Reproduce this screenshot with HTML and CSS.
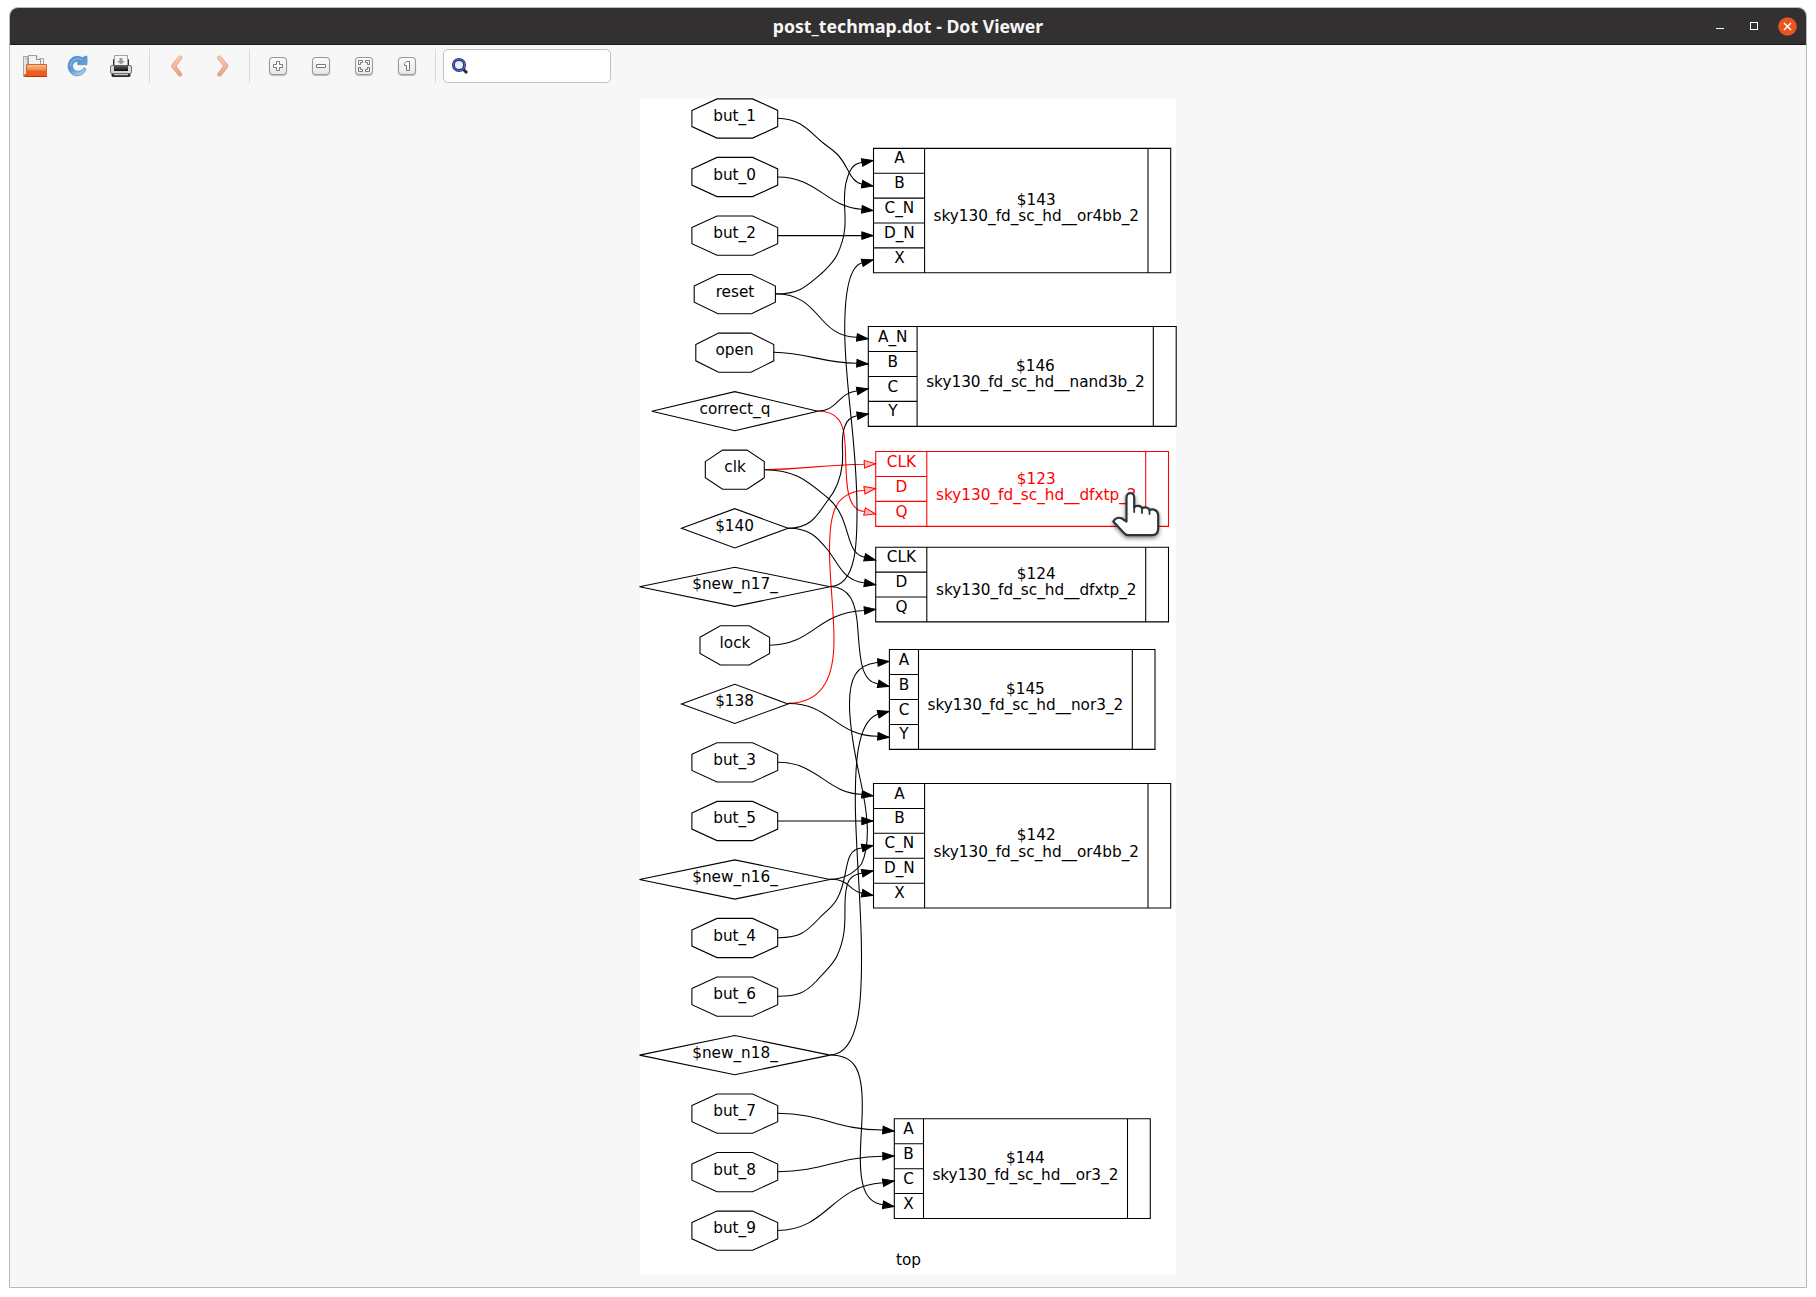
FILE: index.html
```html
<!DOCTYPE html>
<html lang="en">
<head>
<meta charset="utf-8">
<title>post_techmap.dot - Dot Viewer</title>
<link rel="stylesheet" href="styles.css">
</head>
<body>
<div class="window">
  <header class="titlebar">
    <h1 class="title">post_techmap.dot - Dot Viewer</h1>
    <div class="controls">
      <svg width="8" height="8" viewBox="0 0 8 8"><path d="M0 6.5H8" stroke="#fff" fill="none"/></svg>
      <svg width="8" height="8" viewBox="0 0 8 8"><rect x=".5" y=".5" width="7" height="7" stroke="#fff" fill="none"/></svg>
      <svg width="19" height="19" viewBox="0 0 19 19"><circle cx="9.5" cy="9.5" r="9.3" fill="#e95420"/><path d="M6 6L13 13M13 6L6 13" stroke="#fff" stroke-width="1.5" fill="none"/></svg>
    </div>
  </header>

  <nav class="toolbar">
    <span class="tool"><svg width="26" height="24" viewBox="22 54 26 24">
      <defs><linearGradient id="orange" x1="0" y1="0" x2="0" y2="1"><stop offset="0" stop-color="#f6c49a"/><stop offset=".45" stop-color="#f08a4b"/><stop offset=".55" stop-color="#e9601f"/><stop offset="1" stop-color="#f0561c"/></linearGradient></defs>
      <path d="M23.5 56.500h4v20h-4z" fill="#e3e3e3" stroke="#a5a5a5"/><path d="M25 58.500h2.500" stroke="#f0a860"/>
      <path d="M33.500 58.500h10v8h-10z" fill="#eee" stroke="#aaa"/>
      <path d="M28.500 55.500h8l4 4v8h-12z" fill="#f1f1f1" stroke="#9c9c9c"/><path d="M36.500 55.500v4h4" fill="#fff" stroke="#888"/>
      <path d="M26.500 64.500h20v12H24.500v-2h2z" fill="url(#orange)" stroke="#d9622a"/><path d="M25 76.500h22" stroke="#bb2f0c"/>
    </svg></span>
    <span class="tool"><svg width="22" height="22" viewBox="67 56 22 22">
      <defs><linearGradient id="blue" x1="0" y1="0" x2=".6" y2="1"><stop offset="0" stop-color="#4d8fcd"/><stop offset=".6" stop-color="#5f9dd6"/><stop offset="1" stop-color="#a9cdee"/></linearGradient></defs>
      <path d="M87 57.300v8.400H77.700v-2.400l1.900-.6c-4.200-1-7.200 1.300-7 4.500.2 3.600 3.700 6 7.400 4.800 1.700-.5 2.900-1.700 4-3.300l2 1.300c-1.500 4.200-4.500 6.800-9 6.700-5.200 0-9-4.300-8.900-9.600.1-5.800 4.300-10 9.700-9.800 2 .1 3.800.7 5 1.700l1.500-1.700z" fill="url(#blue)" stroke="#4d88c4" stroke-width=".7"/>
      <path d="M81.500 60.500C76 58 70.500 61.500 70.500 67" fill="none" stroke="#9cc5ea" stroke-width="1"/>
    </svg></span>
    <span class="tool"><svg width="24" height="24" viewBox="109 54 24 24">
      <defs><linearGradient id="ink" x1="0" y1="0" x2="0" y2="1"><stop offset="0" stop-color="#666"/><stop offset="1" stop-color="#0c0c0c"/></linearGradient></defs>
      <rect x="113" y="59" width="16" height="10" rx="1" fill="#303030"/>
      <path d="M114.500 55.500h13v10h-13z" fill="#f6f6f6" stroke="#a2a2a2"/>
      <path d="M119.500 58h3v3h2.500l-4 3.500-4-3.500h2.500z" fill="#9b9b9b"/>
      <rect x="110.500" y="65.500" width="21" height="8" rx="1.500" fill="#d6d6d6" stroke="#707070"/>
      <path d="M114 65h14v6h-14z" fill="url(#ink)"/>
      <path d="M111.500 74h19v1.500q0 1.500-2 1.500h-15q-2 0-2-1.500z" fill="#2a2a2a"/><path d="M114 74.700h14" stroke="#f0f0f0"/>
    </svg></span>
    <i class="sep sep-a"></i>
    <span class="tool tool-prev"><svg width="14" height="22" viewBox="170 55 14 22">
      <defs><linearGradient id="peach" gradientUnits="userSpaceOnUse" x1="0" y1="57" x2="0" y2="75"><stop offset="0" stop-color="#f3cda8"/><stop offset="1" stop-color="#efa08a"/></linearGradient></defs>
      <path d="M180 57.800L173.500 66L180 74.300" fill="none" stroke="#dfa080" stroke-width="4.500" stroke-linecap="round" stroke-linejoin="round"/><path d="M180 57.800L173.500 66L180 74.300" fill="none" stroke="url(#peach)" stroke-width="3.300" stroke-linecap="round" stroke-linejoin="round"/>
    </svg></span>
    <span class="tool tool-next"><svg width="14" height="22" viewBox="216 55 14 22">
      <path d="M219.500 57.800L226 66L219.500 74.300" fill="none" stroke="#dfa080" stroke-width="4.500" stroke-linecap="round" stroke-linejoin="round"/><path d="M219.500 57.800L226 66L219.500 74.300" fill="none" stroke="url(#peach)" stroke-width="3.300" stroke-linecap="round" stroke-linejoin="round"/>
    </svg></span>
    <i class="sep sep-b"></i>
    <span class="tool key"><svg width="18" height="18" viewBox="0 0 18 18"><path d="M7.500 4.500h3v3h3v3h-3v3h-3v-3h-3v-3h3z"/></svg></span>
    <span class="tool key"><svg width="18" height="18" viewBox="0 0 18 18"><path d="M4.500 7.500h9v3h-9z"/></svg></span>
    <span class="tool key"><svg width="18" height="18" viewBox="0 0 18 18"><path d="M3.500 3.500h4v2h-2v2h-2zM14.500 3.500h-4v2h2v2h2zM3.500 14.500h4v-2h-2v-2h-2zM14.500 14.500h-4v-2h2v-2h2z"/></svg></span>
    <span class="tool key"><svg width="18" height="18" viewBox="0 0 18 18"><path d="M8.500 4.500h3v9h-3v-5h-2v-2z"/></svg></span>
    <i class="sep sep-c"></i>
    <label class="search"><svg width="18" height="18" viewBox="451 57 18 18">
      <path d="M463.500 69.500L467 73" stroke="#2b2b22" stroke-width="3"/>
      <circle cx="459" cy="65" r="5.600" fill="#ececf4" stroke="#23357f" stroke-width="3"/><circle cx="459" cy="65" r="5.800" fill="none" stroke="#5577cc" stroke-width="1"/>
    </svg><input class="field" type="text" aria-label="Find"></label>
  </nav>

  <main class="canvas">
    <svg class="graph" width="536" height="1176" viewBox="640 99 536 1176">
      <defs>
        <marker id="tip" markerUnits="userSpaceOnUse" markerWidth="14" markerHeight="10" refX="12" refY="5" orient="auto"><path d="M.8 1.200L12 5L.8 8.800z" fill="#000" stroke="#000"/></marker>
        <marker id="tip-hot" markerUnits="userSpaceOnUse" markerWidth="14" markerHeight="10" refX="12" refY="5" orient="auto"><path d="M.8 1.200L12 5L.8 8.800z" fill="#ffbcbc" stroke="#f00"/></marker>
        <polygon id="but" points="-42.9,-8.1 -17.8,-19.6 17.8,-19.6 42.9,-8.1 42.9,8.1 17.8,19.6 -17.8,19.6 -42.9,8.1"/>
        <polygon id="reset" points="-40.6,-8.1 -16.8,-19.6 16.8,-19.6 40.6,-8.1 40.6,8.1 16.8,19.6 -16.8,19.6 -40.6,8.1"/>
        <polygon id="open" points="-39,-8.1 -16.200,-19.6 16.200,-19.6 39,-8.1 39,8.1 16.200,19.6 -16.200,19.6 -39,8.1"/>
        <polygon id="clk" points="-29.5,-8.1 -12.2,-19.6 12.2,-19.6 29.5,-8.1 29.5,8.1 12.2,19.6 -12.2,19.6 -29.5,8.1"/>
        <polygon id="lock" points="-34.8,-8.1 -14.4,-19.6 14.4,-19.6 34.8,-8.1 34.8,8.1 14.4,19.6 -14.4,19.6 -34.8,8.1"/>
        <polygon id="wire-s" points="-53.3,0 0,-19.6 53.3,0 0,19.6"/>
        <polygon id="wire-m" points="-83,0 0,-19.6 83,0 0,19.6"/>
        <polygon id="wire-l" points="-95.3,0 0,-19.6 95.3,0 0,19.6"/>
      </defs>

      <g class="line">
        <use href="#but" x="734.8" y="118.500"/><use href="#but" x="734.8" y="177"/><use href="#but" x="734.8" y="235.600"/>
        <use href="#reset" x="734.8" y="294.100"/><use href="#open" x="734.8" y="352.700"/><use href="#wire-m" x="734.8" y="411.200"/>
        <use href="#clk" x="734.8" y="469.700"/><use href="#wire-s" x="734.8" y="528.300"/><use href="#wire-l" x="734.8" y="586.800"/>
        <use href="#lock" x="734.8" y="645.400"/><use href="#wire-s" x="734.8" y="703.900"/><use href="#but" x="734.8" y="762.400"/>
        <use href="#but" x="734.8" y="821"/><use href="#wire-l" x="734.8" y="879.500"/><use href="#but" x="734.8" y="938"/>
        <use href="#but" x="734.8" y="996.600"/><use href="#wire-l" x="734.8" y="1055.100"/><use href="#but" x="734.8" y="1113.600"/>
        <use href="#but" x="734.8" y="1172.100"/><use href="#but" x="734.8" y="1230.700"/>
        <path d="M873.500 148.400H1170.700V272.800H873.500zM924.600 148.400V272.800M1148 148.400V272.800M873.500 173.200H924.600M873.500 198.100H924.600M873.500 223H924.600M873.500 247.900H924.600"/>
        <path d="M868.300 326.500H1176.200V426.400H868.300zM917.100 326.500V426.400M1153.300 326.500V426.400M868.300 351.500H917.100M868.300 376.500H917.100M868.300 401.400H917.100"/>
        <path d="M875.700 547.300H1168.500V621.900H875.700zM926.800 547.300V621.900M1145.700 547.300V621.900M875.700 572.100H926.800M875.700 597H926.800"/>
        <path d="M889.400 649.500H1155V749.400H889.400zM918.500 649.500V749.400M1132.300 649.500V749.400M889.400 674.500H918.500M889.400 699.500H918.500M889.400 724.500H918.500"/>
        <path d="M873.500 783.500H1170.700V908H873.500zM924.600 783.500V908M1148 783.500V908M873.500 808.500H924.600M873.500 833.300H924.600M873.500 858.300H924.600M873.500 883.300H924.600"/>
        <path d="M894.300 1118.800H1150.300V1218.500H894.300zM923.500 1118.800V1218.500M1127.500 1118.800V1218.500M894.300 1143.700H923.500M894.300 1168.700H923.500M894.300 1193.500H923.500"/>
      </g>

      <g class="line edge-hot">
        <path d="M764.300 469.700C800 469.500 822 465 863.500 464.200L875.500 463.700"/>
        <path d="M817.500 411C839 411 843 425 844.300 436C848 462 841 510 863.500 511.300L875.500 514"/>
        <path d="M788 703.300C826 703 834 672 834 640C834 610 829.500 580 829.500 550C829.500 512 835 493 863.500 490.300L875.500 488.500"/>
      </g>
      <g class="line hot"><path d="M875.700 451.500H1168.500V526.400H875.700zM926.800 451.500V526.400M1145.700 451.500V526.400M875.700 476.500H926.800M875.700 501.400H926.800"/></g>
      <g class="line edge">
        <path d="M777.500 118.300C801 119 808 130 822 142C828 147 832 149 837 154C849 166 849 181 861.500 184L873 186"/>
        <path d="M777.500 177C818 177 826 207 861.500 209.300L873 210.500"/>
        <path d="M777.500 235.600L873 235.600"/>
        <path d="M775.400 294C799 294 806 287 822 273C828 267 833 263 837 255C853 222 839 205 847 179C850 169 853 164 861.500 162.500L873 160.500"/>
        <path d="M775.400 293.700C821 294 816 336 856.500 337.300L868 338.800"/>
        <path d="M773.600 352.300C808 353 823 363 856.500 363.300L868 364"/>
        <path d="M817.500 411C838 411 838 393 856.500 391L868 388.800"/>
        <path d="M764.300 469.700C796 470 807 481 828 498C852 518 844 552 863.500 557L875.500 560"/>
        <path d="M788 528.300C812 528 817 515 828 500C833 494 835 490 837.500 484C848 456 838 443 845 426C847 420 850 417 857 415.800L868.300 414"/>
        <path d="M788 528.300C809 528 817 537 827 549C838 562 842 580 863.500 582.700L875.500 584.800"/>
        <path d="M830 586.500C858 586 857 536 857 510C857 440 845 390 844.700 330C844.700 308 846 268 861.500 263L873 260"/>
        <path d="M830 586.500C851 587 855 605 857 620C860 648 858 681 877.500 683.700L889 686.500"/>
        <path d="M769.600 645.200C813 645 816 613 863.500 610.500L875.500 609.300"/>
        <path d="M788 703.500C830 703 836 736 877 736.300L889 737.300"/>
        <path d="M777.500 762.300C818 762 826 793 861.500 794.300L873 795.800"/>
        <path d="M777.500 821L873 821"/>
        <path d="M830 879.300C848 879 857.500 869 861.500 864C872.500 840 865.500 804 861 783C855 756 849.500 728 849.500 704C849.500 678 856 665 877 662.500L889 661.500"/>
        <path d="M830 879.300C850 879 848 890 861.500 893L873 895.500"/>
        <path d="M777.500 937.700C800 938 806 932 819 918.500C826 911 832 908 837 899C850 876 842 850 861.500 848L873 845.500"/>
        <path d="M777.500 996.300C797 996.500 805 993 816 981.500C826 970 832 966 837 956C850 928 842 907 846.500 888C848 880 851 875 861.500 873.300L873 870.800"/>
        <path d="M830 1055C863 1054 861.500 985 861.500 955C861.500 905 855.300 845 855.300 800C855.300 770 856 723 877 714.500L889 711.500"/>
        <path d="M830 1055C855 1055 862.300 1070 862.300 1105C862.300 1125 860.300 1140 860.300 1158C860.300 1180 863 1202 882.500 1204.700L894 1206.500"/>
        <path d="M777.500 1113.300C824 1113.500 836 1130 882.500 1130L894 1131"/>
        <path d="M777.500 1171.800C824 1171.500 836 1157 882.500 1156.300L894 1156"/>
        <path d="M777.500 1230.500C828 1230 831 1186 882.500 1182.800L894 1181"/>
      </g>

      <g class="label">
        <text x="734.6" y="121">but_1</text><text x="734.6" y="180">but_0</text><text x="734.6" y="238">but_2</text>
        <text x="735" y="297">reset</text><text x="734.6" y="355">open</text><text x="735" y="414">correct_q</text>
        <text x="735" y="472">clk</text><text x="734.6" y="531">$140</text><text x="735" y="589">$new_n17_</text>
        <text x="735" y="648">lock</text><text x="734.6" y="706">$138</text><text x="734.6" y="765">but_3</text>
        <text x="734.6" y="823">but_5</text><text x="735" y="882">$new_n16_</text><text x="734.6" y="941">but_4</text>
        <text x="734.6" y="999">but_6</text><text x="735" y="1058">$new_n18_</text><text x="734.6" y="1116">but_7</text>
        <text x="734.6" y="1175">but_8</text><text x="734.6" y="1233">but_9</text>

        <text x="899.4" y="163">A</text><text x="899.4" y="188">B</text><text x="899.4" y="213">C_N</text><text x="899.4" y="238">D_N</text><text x="899.4" y="263">X</text>
        <text x="1036.300" y="205">$143</text><text x="1036.300" y="221">sky130_fd_sc_hd__or4bb_2</text>

        <text x="892.800" y="342">A_N</text><text x="892.800" y="367">B</text><text x="892.800" y="392">C</text><text x="892.800" y="416">Y</text>
        <text x="1035.400" y="371">$146</text><text x="1035.400" y="387">sky130_fd_sc_hd__nand3b_2</text>

        <g class="label-hot"><text x="901.4" y="467">CLK</text><text x="901.4" y="492">D</text><text x="901.4" y="517">Q</text>
        <text x="1036.300" y="484">$123</text><text x="1036.300" y="500">sky130_fd_sc_hd__dfxtp_2</text></g>

        <text x="901.4" y="562">CLK</text><text x="901.4" y="587">D</text><text x="901.4" y="612">Q</text>
        <text x="1036.300" y="579">$124</text><text x="1036.300" y="595">sky130_fd_sc_hd__dfxtp_2</text>

        <text x="904" y="665">A</text><text x="904" y="690">B</text><text x="904" y="715">C</text><text x="904" y="739">Y</text>
        <text x="1025.400" y="694">$145</text><text x="1025.400" y="710">sky130_fd_sc_hd__nor3_2</text>

        <text x="899.4" y="799">A</text><text x="899.4" y="823">B</text><text x="899.4" y="848">C_N</text><text x="899.4" y="873">D_N</text><text x="899.4" y="898">X</text>
        <text x="1036.300" y="840">$142</text><text x="1036.300" y="857">sky130_fd_sc_hd__or4bb_2</text>

        <text x="908.5" y="1134">A</text><text x="908.5" y="1159">B</text><text x="908.5" y="1184">C</text><text x="908.5" y="1209">X</text>
        <text x="1025.400" y="1163">$144</text><text x="1025.400" y="1180">sky130_fd_sc_hd__or3_2</text>
        <text x="908.5" y="1265">top</text>
      </g>

      <path class="pointer" d="M1126.500 521.500V497.500C1126.500 491.800 1134.200 491.800 1134.200 497.500V507.500C1136 505 1141 505.500 1142 508.500C1144.500 506.500 1148.500 507.300 1149.500 510C1153.500 508.300 1158.200 510.500 1158.200 515.500V528C1158.200 533 1156.500 535.200 1152 535.200H1128C1126 535.200 1125 534.200 1123.500 532.500L1113.300 521.500C1115 518.500 1118.300 516.800 1121.500 518.300Z"/>
      <path class="knuckle" d="M1134.200 507V512M1142 508V513M1149.500 510V514"/>
    </svg>
  </main>
</div>
</body>
</html>
```
FILE: styles.css
```css
* { box-sizing: border-box; }
body { margin: 0; height: 1297px; padding: 7px 9px 9px; background: #fff; overflow: hidden; }
.window {
  width: 1798px; height: 1281px; display: flex; flex-direction: column;
  border: 1px solid #b9b9b9; border-radius: 9px 9px 0 0; background: #f7f7f7; overflow: hidden;
}
.titlebar {
  flex: none; height: 37px; display: grid; grid-template-columns: 1fr auto 1fr; align-items: center;
  background: #333031; border-bottom: 1px solid #1c1b1b;
}
.title {
  grid-column: 2; margin: 0; color: #f6f6f6; white-space: nowrap;
  font: bold 17.7px/36px "Noto Sans", "Open Sans", sans-serif;
}
.controls { display: flex; align-items: center; justify-content: flex-end; gap: 26px; padding-right: 9px; }
.controls svg:last-child { margin-left: -6px; }

.toolbar { flex: none; height: 42px; display: flex; align-items: flex-start; padding: 4px 0 0 3px; }
.tool { width: 43px; height: 34px; display: flex; align-items: center; justify-content: center; }
.tool-prev { margin-right: 3px; }
.sep { width: 1px; height: 34px; background: #d9d9d9; }
.sep-a { margin: 0 5px 0 7px; }
.sep-b { margin: 0 6px 0 5px; }
.sep-c { margin: 0 7px; }
.key svg {
  border-radius: 4px; background: linear-gradient(#fdfdfd, #e6e6e6);
  box-shadow: inset 0 0 0 1px #999, 0 1px 1px #bbb; fill: #fff; stroke: #777;
}
.search {
  width: 168px; height: 34px; display: flex; align-items: center; padding: 0 7px;
  border: 1px solid #c0c0c0; border-radius: 5px; background: #fff;
}
.field { width: 130px; border: 0; outline: 0; background: none; font: 15px "Noto Sans", sans-serif; }

.canvas { flex: 1; display: flex; justify-content: center; align-items: flex-start; padding-top: 12px; }
.graph { background: #fff; overflow: visible; }
.line { fill: none; stroke: #000; stroke-width: 1.08; }
.edge path { marker-end: url(#tip); }
.hot, .edge-hot { stroke: #f00; }
.edge-hot path { marker-end: url(#tip-hot); }
.label { font: 15.28px "DejaVu Sans", sans-serif; text-anchor: middle; fill: #000; }
.label-hot { fill: #f00; }
.pointer { fill: #fff; stroke: #2e3436; stroke-width: 2.2; stroke-linejoin: round; filter: drop-shadow(0 2px 2px rgba(0, 0, 0, .5)); }
.knuckle { fill: none; stroke: #2e3436; stroke-width: 1.8; stroke-linecap: round; }
```
